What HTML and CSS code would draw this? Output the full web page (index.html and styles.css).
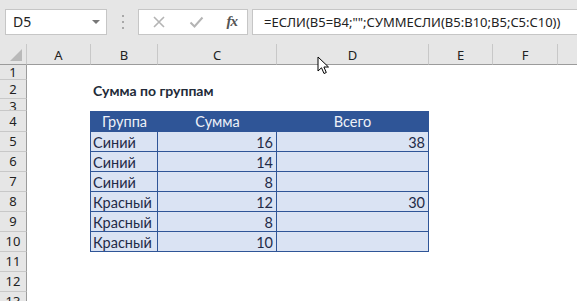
FILE: index.html
```html
<!DOCTYPE html>
<html lang="ru">

<head>
    <meta charset="UTF-8">
    <title>Сумма по группам</title>
    <link rel="stylesheet" href="styles.css">
</head>

<body>
    <div class="app">
        <!-- строка формул -->
        <div class="formulaBar">
            <div class="nameBox">
                <span>D5</span>
                <span class="caret"></span>
            </div>
            <div class="grip"><i></i><i></i><i></i></div>
            <div class="fxButtons">
                <svg class="btnIcon" width="14" height="14" viewBox="0 0 14 14">
                    <path d="M2 2 L12 12 M12 2 L2 12" stroke="#b4b4b4" stroke-width="1.6" fill="none"/>
                </svg>
                <svg class="btnIcon" width="15" height="14" viewBox="0 0 15 14">
                    <path d="M1.5 7.5 L5.5 11.5 L13.5 2.5" stroke="#b4b4b4" stroke-width="2" fill="none"/>
                </svg>
                <span class="fx">fx</span>
            </div>
            <div class="formula">=ЕСЛИ(B5=B4;"";СУММЕСЛИ(B5:B10;B5;C5:C10))</div>
        </div>

        <!-- лист -->
        <div class="sheet">
            <div class="corner"></div>
            <div class="colHead">A</div>
            <div class="colHead">B</div>
            <div class="colHead">C</div>
            <div class="colHead">D</div>
            <div class="colHead">E</div>
            <div class="colHead">F</div>
            <div class="colHead last"></div>

            <div class="rowHead">1</div>
            <div class="rowHead">2</div>
            <div class="rowHead small">3</div>
            <div class="rowHead">4</div>
            <div class="rowHead">5</div>
            <div class="rowHead">6</div>
            <div class="rowHead">7</div>
            <div class="rowHead">8</div>
            <div class="rowHead">9</div>
            <div class="rowHead">10</div>
            <div class="rowHead">11</div>
            <div class="rowHead">12</div>
            <div class="rowHead">13</div>

            <div class="title">Сумма по группам</div>

            <div class="range">
                <div class="th">Группа</div>
                <div class="th">Сумма</div>
                <div class="th">Всего</div>

                <div class="td">Синий</div>
                <div class="td num">16</div>
                <div class="td num">38</div>

                <div class="td">Синий</div>
                <div class="td num">14</div>
                <div class="td num"></div>

                <div class="td">Синий</div>
                <div class="td num">8</div>
                <div class="td num"></div>

                <div class="td">Красный</div>
                <div class="td num">12</div>
                <div class="td num">30</div>

                <div class="td">Красный</div>
                <div class="td num">8</div>
                <div class="td num"></div>

                <div class="td">Красный</div>
                <div class="td num">10</div>
                <div class="td num"></div>
            </div>

            <!-- указатель мыши -->
            <svg class="pointer" width="14" height="20" viewBox="0 0 14 20">
                <path d="M1 1 L1 15 L4.5 11.8 L7 17.5 L9.3 16.5 L6.9 11 L11.5 11 Z" fill="#fff" stroke="#000" stroke-width="1" stroke-linejoin="round"/>
            </svg>
        </div>
    </div>
</body>

</html>
```

FILE: styles.css
```css
* {
    margin: 0;
    padding: 0;
    box-sizing: border-box;
}

body {
    background: #fff;
    font-family: "Noto Sans", "Liberation Sans", sans-serif;
}

.app {
    width: 577px;
    height: 301px;
    overflow: hidden;
    position: relative;
}

/* строка формул */
.formulaBar {
    display: flex;
    align-items: center;
    height: 44px;
    padding: 0 0 1px 5px;
    background: #e6e6e6;
}

.nameBox {
    display: flex;
    align-items: center;
    justify-content: space-between;
    width: 102px;
    height: 26px;
    padding: 0 6px 0 7px;
    background: #fff;
    border: 1px solid #c6c6c6;
    font-size: 14px;
    color: #222;
}

.nameBox .caret {
    width: 0;
    height: 0;
    border-left: 4px solid transparent;
    border-right: 4px solid transparent;
    border-top: 4px solid #777;
}

.grip {
    display: flex;
    flex-direction: column;
    gap: 4px;
    width: 31px;
    align-items: center;
}

.grip i {
    width: 2px;
    height: 2px;
    background: #a8a8a8;
}

.fxButtons {
    display: flex;
    align-items: center;
    width: 110px;
    height: 26px;
    padding: 0 10px 0 13px;
    justify-content: space-between;
    background: #fff;
    border: 1px solid #c6c6c6;
}

.fx {
    font-family: "Liberation Serif", serif;
    font-style: italic;
    font-weight: bold;
    font-size: 15px;
    color: #555;
    letter-spacing: -1px;
}

.formula {
    flex: 1;
    height: 26px;
    margin-left: 4px;
    margin-right: -4px;
    padding: 3px 0 0 11px;
    background: #fff;
    border: 1px solid #c6c6c6;
    font-size: 13px;
    color: #222;
    white-space: nowrap;
}

/* лист */
.sheet {
    display: grid;
    grid-template-columns: 27px 64px 67px 119px 152px 64px 65px 1fr;
    grid-template-rows: 21px 15px 19px 12px 21px repeat(9, 20px);
    font-family: "Lato", "Liberation Sans", sans-serif;
}

.corner {
    position: relative;
    background: #e6e6e6;
    border-right: 1px solid #c8c8c8;
    border-bottom: 1px solid #9b9b9b;
}

.corner::after {
    content: "";
    position: absolute;
    right: 4px;
    bottom: 3px;
    width: 12px;
    height: 12px;
    background: #b9b9b9;
    clip-path: polygon(100% 0, 100% 100%, 0 100%);
}

.colHead {
    display: flex;
    align-items: center;
    justify-content: center;
    background: #e6e6e6;
    border-right: 1px solid #c8c8c8;
    border-bottom: 1px solid #9b9b9b;
    font-family: "Noto Sans", sans-serif;
    font-size: 13px;
    color: #222;
    padding-top: 2px;
}

.colHead.last {
    border-right: none;
}

.rowHead {
    grid-column: 1;
    display: flex;
    align-items: center;
    justify-content: center;
    background: #e6e6e6;
    border-right: 1px solid #9b9b9b;
    border-bottom: 1px solid #c8c8c8;
    font-family: "Noto Sans", sans-serif;
    font-size: 13px;
    line-height: 1;
    color: #222;
    overflow: hidden;
}

.rowHead.small {
    align-items: flex-start;
    padding-top: 1px;
}

.title {
    grid-row: 3;
    grid-column: 3;
    display: flex;
    align-items: center;
    padding: 1px 0 0 2px;
    font-size: 14px;
    font-weight: bold;
    color: #222a38;
    white-space: nowrap;
}

/* таблица B4:D10 */
.range {
    grid-row: 5 / 12;
    grid-column: 3 / 6;
    margin-left: -1px;
    display: grid;
    grid-template-columns: 67px 119px 1fr;
    grid-template-rows: 19px repeat(6, 20px);
    background: #dae3f3;
    border: 1px solid #2f5597;
    font-size: 14.5px;
    color: #1f2b48;
}

.range .th {
    display: flex;
    align-items: center;
    justify-content: center;
    background: #2f5597;
    color: #eef1f7;
}

.range .td {
    display: flex;
    align-items: center;
    padding: 1px 3px 0 2px;
    border-top: 1px solid #2f5597;
    border-right: 1px solid #2f5597;
}

.range .td:nth-child(3n) {
    border-right: none;
}

.range .num {
    justify-content: flex-end;
}

.pointer {
    position: absolute;
    left: 317px;
    top: 56px;
}
```
